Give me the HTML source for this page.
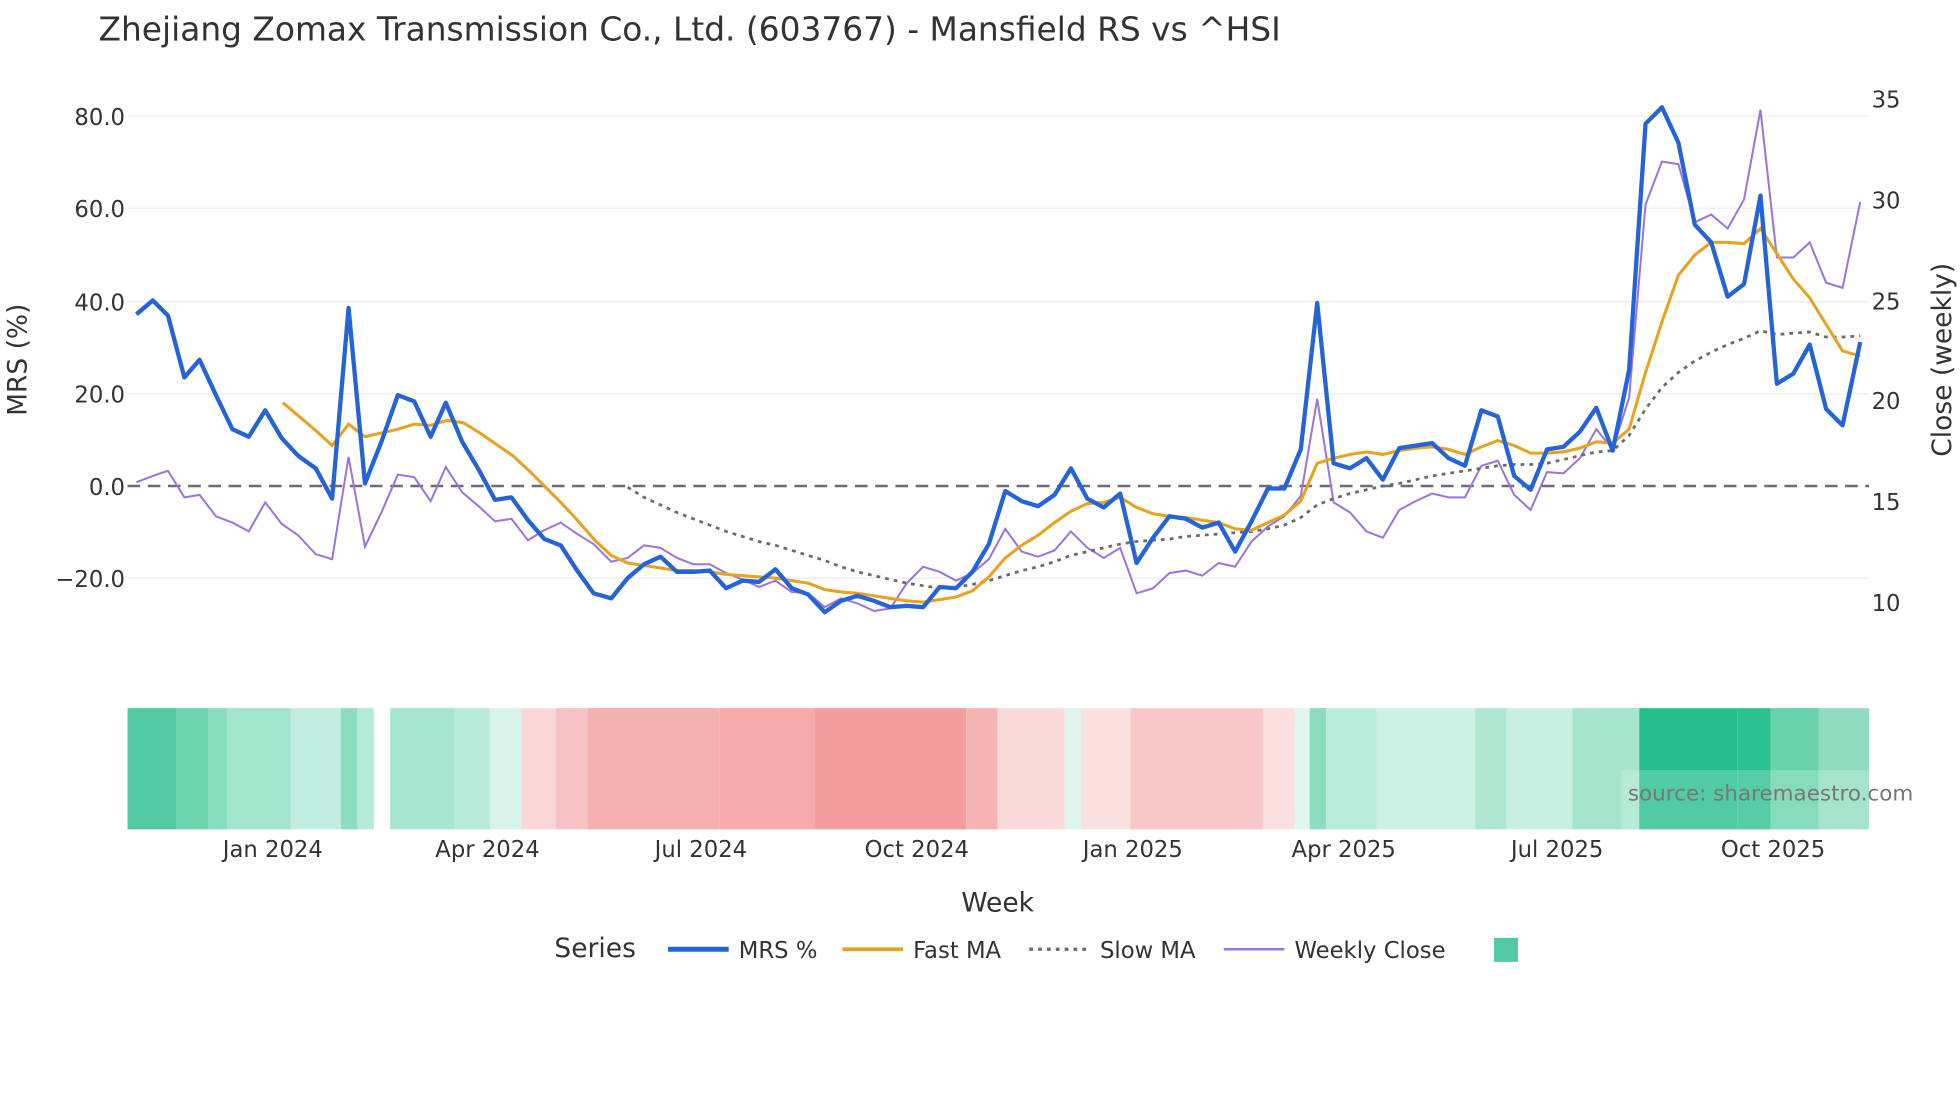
<!DOCTYPE html>
<html><head><meta charset="utf-8"><style>
html,body{margin:0;padding:0;background:#fff;width:1960px;height:1102px;overflow:hidden}
svg{display:block}
text{font-family:"DejaVu Sans","Liberation Sans",sans-serif;fill:#333}
</style></head><body>
<svg width="1960" height="1102" viewBox="0 0 1552 873" preserveAspectRatio="none" xmlns="http://www.w3.org/2000/svg">
<rect width="1552" height="873" fill="#fff"/>
<text x="78" y="32" font-size="26">Zhejiang Zomax Transmission Co., Ltd. (603767) - Mansfield RS vs ^HSI</text>
<g stroke="#ebeef2" stroke-width="1">
<line x1="101" x2="1480" y1="92" y2="92"/><line x1="101" x2="1480" y1="165" y2="165"/><line x1="101" x2="1480" y1="239" y2="239"/><line x1="101" x2="1480" y1="312" y2="312"/><line x1="101" x2="1480" y1="458" y2="458"/>
</g>
<g font-size="18" text-anchor="end">
<text x="99" y="99">80.0</text><text x="99" y="172">60.0</text><text x="99" y="246">40.0</text><text x="99" y="319">20.0</text><text x="99" y="392">0.0</text><text x="99" y="465">−20.0</text>
</g>
<g font-size="18">
<text x="1482" y="85">35</text><text x="1482" y="165">30</text><text x="1482" y="245">25</text><text x="1482" y="324">20</text><text x="1482" y="404">15</text><text x="1482" y="484">10</text>
</g>
<text transform="translate(21,285) rotate(-90)" font-size="21" text-anchor="middle">MRS (%)</text>
<text transform="translate(1545,285) rotate(-90)" font-size="21" text-anchor="middle">Close (weekly)</text>
<line x1="101" x2="1480" y1="385" y2="385" stroke="#6b6b7a" stroke-width="2" stroke-dasharray="10,6"/>
<polyline fill="none" stroke="#9b74dd" stroke-width="1.6" points="108,382 121,377 133,373 146,394 158,392 171,409 184,414 197,421 210,398 223,415 236,424 250,439 263,443 276,362 289,433 302,406 315,376 328,378 341,397 353,370 366,390 379,401 392,413 405,411 418,428 431,420 444,414 457,423 470,431 484,445 497,442 510,432 523,434 536,442 549,447 562,447 575,454 588,459 601,465 614,460 627,469 640,470 653,481 666,474 679,478 692,484 705,482 718,462 731,449 744,453 757,460 770,454 783,443 796,419 809,437 822,441 835,436 848,421 861,434 874,442 887,434 900,470 913,466 926,454 939,452 952,456 965,446 978,449 991,429 1004,417 1017,409 1030,393 1043,316 1056,398 1069,406 1082,421 1095,426 1108,404 1121,397 1134,391 1147,394 1160,394 1173,369 1186,365 1199,392 1212,404 1225,374 1238,375 1251,363 1264,340 1277,356 1290,315 1303,162 1316,128 1329,130 1342,176 1355,170 1368,181 1381,158 1394,87 1407,204 1420,204 1433,192 1446,224 1459,228 1473,160"/>
<polyline fill="none" stroke="#6b6b6b" stroke-width="2.2" stroke-dasharray="3,4" points="497,386 510,394 523,400 536,406 549,411 562,416 575,421 588,425 601,429 614,432 627,436 640,440 653,444 666,449 679,453 692,456 705,459 718,462 731,464 744,466 757,465 770,463 783,460 796,456 809,452 822,449 835,445 848,440 861,437 874,434 887,431 900,429 913,428 926,427 939,425 952,424 965,423 978,422 991,421 1004,419 1017,416 1030,410 1043,400 1056,395 1069,391 1082,388 1095,385 1108,383 1121,380 1134,377 1147,375 1160,373 1173,371 1186,369 1199,368 1212,368 1225,367 1238,364 1251,361 1264,358 1277,357 1290,345 1303,324 1316,307 1329,295 1342,286 1355,279 1368,273 1381,268 1394,262 1407,265 1420,264 1433,263 1446,267 1459,267 1473,266"/>
<polyline fill="none" stroke="#e8a21f" stroke-width="2.4" points="224,319 237,330 250,341 263,353 276,336 289,346 302,343 315,340 328,336 341,337 354,333 367,335 380,343 393,352 406,361 419,373 432,386 445,399 458,413 471,428 484,440 497,446 510,448 523,450 536,452 549,452 562,453 575,455 588,456 601,457 614,458 627,460 640,462 653,467 666,469 679,470 692,472 705,474 718,476 731,477 744,475 757,473 770,468 783,457 796,442 809,432 822,424 835,414 848,405 861,399 874,398 887,394 900,402 913,407 926,409 939,410 952,412 965,414 978,419 991,420 1004,414 1017,408 1030,397 1043,367 1056,363 1069,360 1082,358 1095,360 1108,357 1121,355 1134,354 1147,356 1160,360 1173,354 1186,349 1199,353 1212,359 1225,359 1238,358 1251,355 1264,350 1277,351 1290,340 1303,295 1316,255 1329,218 1342,202 1355,192 1368,192 1381,193 1394,181 1407,201 1420,221 1433,236 1446,257 1459,278 1473,282"/>
<polyline fill="none" stroke="#2563d9" stroke-width="3.4" stroke-linejoin="round" points="108,249 121,238 133,250 146,299 158,285 171,313 184,340 197,346 210,325 223,347 236,361 250,371 263,395 276,244 289,383 302,350 315,313 328,318 341,346 353,319 366,350 379,372 392,396 405,394 418,412 431,427 444,432 457,452 470,470 484,474 497,458 510,447 523,441 536,453 549,453 562,452 575,466 588,460 601,461 614,451 627,466 640,471 653,485 666,476 679,472 692,476 705,481 718,480 731,481 744,465 757,466 770,453 783,431 796,389 809,397 822,401 835,392 848,371 861,395 874,402 887,391 900,446 913,426 926,409 939,411 952,418 965,414 978,437 991,413 1004,387 1017,387 1030,356 1043,240 1056,367 1069,371 1082,363 1095,380 1108,355 1121,353 1134,351 1147,363 1160,369 1173,325 1186,330 1199,377 1212,388 1225,356 1238,354 1251,342 1264,323 1277,357 1290,293 1303,98 1316,85 1329,113 1342,178 1355,192 1368,235 1381,225 1394,155 1407,304 1420,296 1433,273 1446,324 1459,337 1473,271"/>
<g>
<rect x="101" y="561" width="39" height="96" fill="#52c9a2"/>
<rect x="140" y="561" width="25" height="96" fill="#6dd4b0"/>
<rect x="165" y="561" width="15" height="96" fill="#86dcbd"/>
<rect x="180" y="561" width="50" height="96" fill="#a0e4cb"/>
<rect x="230" y="561" width="40" height="96" fill="#c0ede0"/>
<rect x="270" y="561" width="13" height="96" fill="#8cdcc0"/>
<rect x="283" y="561" width="13" height="96" fill="#b5e9d8"/>
<rect x="309" y="561" width="51" height="96" fill="#a6e5cf"/>
<rect x="360" y="561" width="28" height="96" fill="#b8ebd9"/>
<rect x="388" y="561" width="25" height="96" fill="#d8f4ea"/>
<rect x="413" y="561" width="27" height="96" fill="#fad6d6"/>
<rect x="440" y="561" width="25" height="96" fill="#f7c2c3"/>
<rect x="465" y="561" width="105" height="96" fill="#f5b0b1"/>
<rect x="570" y="561" width="75" height="96" fill="#f5aaab"/>
<rect x="645" y="561" width="120" height="96" fill="#f49d9e"/>
<rect x="765" y="561" width="25" height="96" fill="#f6b3b4"/>
<rect x="790" y="561" width="53" height="96" fill="#fad9da"/>
<rect x="843" y="561" width="13" height="96" fill="#dff5ec"/>
<rect x="856" y="561" width="39" height="96" fill="#fbe0e0"/>
<rect x="895" y="561" width="105" height="96" fill="#f8c8c9"/>
<rect x="1000" y="561" width="25" height="96" fill="#fbdede"/>
<rect x="1025" y="561" width="12" height="96" fill="#e0f6ee"/>
<rect x="1037" y="561" width="13" height="96" fill="#8cdcc0"/>
<rect x="1050" y="561" width="40" height="96" fill="#b9ecdb"/>
<rect x="1090" y="561" width="78" height="96" fill="#cdf1e5"/>
<rect x="1168" y="561" width="25" height="96" fill="#b0e7d3"/>
<rect x="1193" y="561" width="52" height="96" fill="#c8f0e2"/>
<rect x="1245" y="561" width="53" height="96" fill="#a5e4cd"/>
<rect x="1298" y="561" width="78" height="96" fill="#26be8c"/>
<rect x="1376" y="561" width="26" height="96" fill="#2cc190"/>
<rect x="1402" y="561" width="38" height="96" fill="#67d2ac"/>
<rect x="1440" y="561" width="40" height="96" fill="#8fdcc1"/>
<rect x="1284" y="610" width="196" height="47" fill="#ffffff" fill-opacity="0.2"/>
</g>
<text x="1289" y="634" font-size="17" style="fill:#777">source: sharemaestro.com</text>
<g font-size="18" text-anchor="middle">
<text x="216" y="679">Jan 2024</text><text x="386" y="679">Apr 2024</text><text x="555" y="679">Jul 2024</text><text x="726" y="679">Oct 2024</text><text x="897" y="679">Jan 2025</text><text x="1064" y="679">Apr 2025</text><text x="1233" y="679">Jul 2025</text><text x="1404" y="679">Oct 2025</text>
</g>
<text x="790" y="722" font-size="21" text-anchor="middle">Week</text>
<text x="439" y="758" font-size="21">Series</text>
<line x1="529" x2="577" y1="752" y2="752" stroke="#2563d9" stroke-width="4"/>
<text x="585" y="759" font-size="18">MRS %</text>
<line x1="667" x2="715" y1="752" y2="752" stroke="#e8a21f" stroke-width="3"/>
<text x="723" y="759" font-size="18">Fast MA</text>
<line x1="815" x2="863" y1="752" y2="752" stroke="#6b6b6b" stroke-width="2.5" stroke-dasharray="3,4"/>
<text x="871" y="759" font-size="18">Slow MA</text>
<line x1="969" x2="1017" y1="752" y2="752" stroke="#9b74dd" stroke-width="2"/>
<text x="1025" y="759" font-size="18">Weekly Close</text>
<rect x="1183" y="743" width="19" height="19" fill="#52c9a2"/>
</svg>
</body></html>
